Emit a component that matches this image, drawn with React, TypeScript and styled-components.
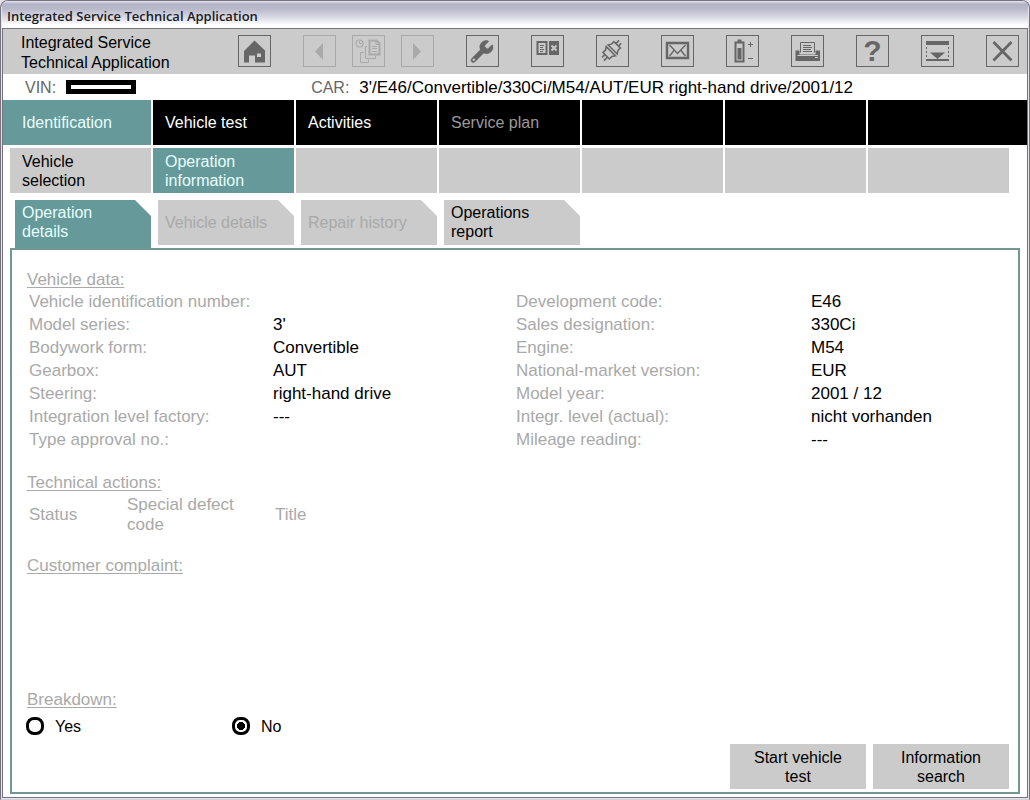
import React, { useState } from "react";
import styled, { createGlobalStyle, css } from "styled-components";

const teal = "#669999";
const grey = "#cbcbcb";
const ink = "#666666";
const faint = "#a9a9a9";

const GlobalStyle = createGlobalStyle`
  *, *::before, *::after { box-sizing: border-box; }
  body {
    margin: 0;
    background: #e4e4ea;
    color: #000;
    font-family: "Liberation Sans", Arial, sans-serif;
    font-size: 16px;
    line-height: 19px;
  }
  button { font: inherit; color: inherit; border: 0; padding: 0; cursor: pointer; }
  button:disabled { cursor: default; }
`;

const Frame = styled.div`
  display: flex;
  flex-direction: column;
  min-height: 100vh;
  padding: 0 1px 1px;
  border: 1px solid #77727f;
  border-bottom: 1px solid #d0d0d6;
  border-radius: 8px 8px 0 0;
  background: #e4e4ea;
  overflow: hidden;
`;

const TitleBar = styled.header`
  height: 27px;
  padding: 2px 5px 0;
  display: flex;
  align-items: center;
  background: linear-gradient(#e6e6ee 0, #b3b3c8 3px, #b9b9cc 8px, #dcdce6 17px, #ffffff 24px);
  color: #1a1a22;
  font-family: "Open Sans", "Noto Sans", sans-serif;
  font-size: 13px;
  font-weight: 600;
  line-height: 16px;
`;

const Client = styled.main`
  flex: 1;
  display: flex;
  flex-direction: column;
  border: 1px solid #77727f;
  background: #fff;
`;

const Toolbar = styled.div`
  display: flex;
  justify-content: space-between;
  align-items: center;
  height: 45px;
  padding: 0 8px 2px 18px;
  background: ${grey};
`;

const AppName = styled.h1`
  margin: 4px 0 0;
  font-size: 16px;
  font-weight: 400;
  line-height: 20px;
`;

const Tools = styled.div`
  display: flex;
  gap: 32px;
`;

const ToolGroup = styled.div`
  display: flex;
  gap: 16px;
`;

const ToolButton = styled.button`
  display: flex;
  align-items: center;
  justify-content: center;
  width: 33px;
  height: 32px;
  border: 1px solid ${ink};
  background: transparent;
  color: ${ink};

  &:disabled {
    border-color: ${faint};
    color: ${faint};
  }
`;

const Question = styled.span`
  font-size: 30px;
  font-weight: 700;
  line-height: 30px;
`;

const InfoBar = styled.div`
  display: flex;
  align-items: center;
  height: 26px;
  padding-left: 22px;
`;

const InfoLabel = styled.span`
  color: ${ink};
`;

const HiddenNumber = styled.span`
  width: 70px;
  height: 14px;
  margin: 0 175px 0 10px;
  border: 5px solid #000;
`;

const CarName = styled.span`
  margin-left: 10px;
  font-size: 17px;
`;

const MainNav = styled.nav`
  display: grid;
  grid-template-columns: 148fr repeat(5, 141fr) 159fr;
  gap: 2px;
  height: 45px;
`;

const SubNav = styled.nav`
  display: grid;
  grid-template-columns: repeat(7, 1fr);
  gap: 2px;
  height: 45px;
  margin: 3px 18px 0 7px;
`;

const cell = css`
  min-width: 0;
  text-align: left;
`;

const MainItem = styled.button<{ $active?: boolean; $first?: boolean }>`
  ${cell}
  padding-left: ${(p) => (p.$first ? 19 : 12)}px;
  background: ${(p) => (p.$active ? teal : "#000")};
  color: ${(p) => (p.$active ? "#e6ffff" : "#fff")};
  &:disabled { color: #999; }
`;

const SubItem = styled.button<{ $active?: boolean }>`
  ${cell}
  padding: 0 40px 0 12px;
  background: ${(p) => (p.$active ? teal : grey)};
  color: ${(p) => (p.$active ? "#e6ffff" : "#000")};
`;

const Tabs = styled.div`
  display: flex;
  gap: 7px;
  height: 48px;
  margin-top: 7px;
  padding-left: 12px;
`;

const Tab = styled.button<{ $active?: boolean }>`
  width: 136px;
  height: ${(p) => (p.$active ? 48 : 45)}px;
  padding: 0 20px ${(p) => (p.$active ? 5 : 2)}px 7px;
  text-align: left;
  background: ${(p) => (p.$active ? teal : grey)};
  color: ${(p) => (p.$active ? "#e6ffff" : "#000")};
  clip-path: polygon(0 0, calc(100% - 16px) 0, 100% 16px, 100% 100%, 0 100%);
  &:disabled {
    padding: 0 0 0 7px;
    color: ${faint};
  }
`;

const Panel = styled.section`
  flex: 1;
  display: flex;
  flex-direction: column;
  margin: 0 7px 3px;
  padding: 20px 9px 3px 15px;
  border: 2px solid #739793;
`;

const Heading = styled.h2`
  margin: 0;
  color: ${faint};
  font-size: 17px;
  font-weight: 400;
  line-height: 20px;
  text-decoration: underline 1px;
  text-underline-offset: 2px;
`;

const DataColumns = styled.div`
  display: grid;
  grid-template-columns: 487fr 493fr;
  padding-left: 2px;
  margin-bottom: 22px;
`;

const DataList = styled.dl<{ $split: string }>`
  display: grid;
  grid-template-columns: ${(p) => p.$split};
  margin: 0;
  font-size: 17px;
  line-height: 23px;
`;

const Term = styled.dt`
  color: ${faint};
`;

const Value = styled.dd`
  margin: 0;
`;

const ActionTable = styled.table`
  margin: 2px 0 21px 2px;
  border-collapse: collapse;
  table-layout: fixed;
  width: 400px;
  color: ${faint};
  font-size: 17px;
  line-height: 20px;

  th {
    padding: 0;
    font-weight: 400;
    text-align: left;
    vertical-align: middle;
  }
`;

const HeadCell = styled.th<{ $width?: number }>`
  width: ${(p) => (p.$width ? `${p.$width}px` : "auto")};
`;

const Breakdown = styled.fieldset`
  margin: auto 0 0;
  padding: 0;
  border: 0;
`;

const Legend = styled.legend`
  padding: 0;
`;

const Choices = styled.div`
  display: flex;
  margin-top: 6px;
`;

const Choice = styled.label`
  display: flex;
  align-items: center;
  gap: 11px;
  width: 206px;
  height: 20px;
`;

const Radio = styled.input`
  appearance: none;
  width: 18px;
  height: 18px;
  margin: 0 0 0 -1px;
  border: 3px solid #000;
  border-radius: 8px;
  background: #fff;
  &:checked {
    background: radial-gradient(circle, #000 4px, #fff 4px);
  }
`;

const Actions = styled.div`
  display: flex;
  justify-content: flex-end;
  gap: 7px;
  margin-top: 8px;
`;

const ActionButton = styled.button`
  width: 136px;
  height: 45px;
  padding: 0 20px;
  background: ${grey};
`;

const Icon = ({ children }: { children: React.ReactNode }) => (
  <svg width="31" height="30" viewBox="1 1 31 30" fill="currentColor" aria-hidden="true">
    {children}
  </svg>
);

const HomeIcon = () => (
  <Icon>
    <path fillRule="evenodd" d="M6 16 16.500 5.500 27 15.500V27.500H17V20.500H11V27.500H6ZM19 18.500V22H23V18.500Z" />
  </Icon>
);

const BackIcon = () => (
  <Icon><path d="M20 8V25L12 16.500Z" /></Icon>
);

const ForwardIcon = () => (
  <Icon><path d="M12 8V25L20 16.500Z" /></Icon>
);

const HistoryIcon = () => (
  <Icon>
    <g fill="none" stroke="currentColor">
      <circle cx="7.500" cy="8.500" r="3.500" strokeWidth="1.200" />
      <path d="M7.500 6V8.500H10" />
      <path d="M15 11.500H13.500V23.500H23.500V20.500M12 17.500H8.500V27.500H16.500V24.500" />
      <path d="M17.500 5.500H24.500L27.500 8.500V19.500H17.500Z" strokeWidth="2" />
      <path d="M24 6V9.500H27M20 11.500H25M20 13.500H25M20 16.500H25" />
    </g>
  </Icon>
);

const WrenchIcon = () => (
  <Icon>
    <path
      transform="translate(2.800 3.300) scale(1.100)"
      stroke="currentColor"
      strokeWidth="0.500"
      d="M14.7 6.3a1 1 0 0 0 0 1.4l1.6 1.6a1 1 0 0 0 1.4 0l3.106-3.105c.32-.322.863-.22.983.218a6 6 0 0 1-8.259 7.057l-7.91 7.91a1 1 0 0 1-2.999-3l7.91-7.91a6 6 0 0 1 7.057-8.259c.438.12.54.662.219.984z"
    />
    <circle cx="7.800" cy="24.700" r="1.200" fill={grey} />
  </Icon>
);

const BookIcon = () => (
  <Icon>
    <path d="M6.500 7H15.500V19H6.500Z" fill="none" stroke="currentColor" strokeWidth="2" />
    <path d="M9 10.500H13M9 12.500H12M9 14.500H13M9 16.500H12" stroke="currentColor" />
    <path d="M18 6H28V20H18Z" />
    <path d="M20.500 10.500 25.500 15.500M25.500 10.500 20.500 15.500" stroke={grey} strokeWidth="1.800" />
  </Icon>
);

const PlugIcon = () => (
  <Icon>
    <g transform="translate(15.500 15.500) rotate(-45)" fill="none" stroke="currentColor">
      <path d="M-1 -6.500V6.500L-4 4.500H-7.500V-4.500H-4Z" strokeWidth="1.500" />
      <path d="M1.500 -6.500V6.500L4.500 4.500H8V-4.500H4.500Z" strokeWidth="1.500" />
      <path d="M-7.500 -1.800H-11.500M-7.500 1.800H-12.500M8 -1.800H12.500M8 1.800H12" strokeWidth="1.600" />
    </g>
  </Icon>
);

const MailIcon = () => (
  <Icon>
    <g fill="none" stroke="currentColor">
      <path d="M6 8H27V23H6Z" strokeWidth="2.400" />
      <path d="M8.500 10 16.500 18.500 24.500 10M8.500 21 13 15.500M24.500 21 20 15.500" strokeWidth="1.400" />
    </g>
  </Icon>
);

const BatteryIcon = () => (
  <Icon>
    <path d="M11.500 4.500H15.500V7H11.500Z" />
    <path d="M9.500 7.500H17.500V26.500H9.500Z" fill="none" stroke="currentColor" strokeWidth="2" />
    <path d="M11.500 13H15.500V24.500H11.500Z" />
    <path d="M22 9.500H27M24.500 7V12M22 23.500H27" stroke="currentColor" />
  </Icon>
);

const PrinterIcon = () => (
  <Icon>
    <path d="M4.500 15.500H8.500V19.500H24.500V15.500H29V26H4.500Z" />
    <path d="M9.500 17.500V7.500H23.500V17.500" fill="none" stroke="currentColor" />
    <path d="M12 10.500H20M12 12.500H21M12 14.500H20M12 16.500H21" stroke="currentColor" />
    <path d="M6.500 20.500H27" stroke={grey} />
    <path d="M24 22.500H27" stroke={grey} />
  </Icon>
);

const PullDownIcon = () => (
  <Icon>
    <path d="M5 6H28V10H5ZM9 17.500H24L16.500 24Z" />
    <path d="M5 25H28" stroke="currentColor" strokeWidth="2" />
    <path d="M5.500 12V24M27.500 12V24" stroke="currentColor" strokeDasharray="2 2" />
  </Icon>
);

const CloseIcon = () => (
  <Icon><path d="M7.500 7 25.500 25.500M25.500 7 7.500 25.500" stroke="currentColor" strokeWidth="2.800" /></Icon>
);

const vehicleLeft = [
  ["Vehicle identification number:", ""],
  ["Model series:", "3'"],
  ["Bodywork form:", "Convertible"],
  ["Gearbox:", "AUT"],
  ["Steering:", "right-hand drive"],
  ["Integration level factory:", "---"],
  ["Type approval no.:", ""],
];

const vehicleRight = [
  ["Development code:", "E46"],
  ["Sales designation:", "330Ci"],
  ["Engine:", "M54"],
  ["National-market version:", "EUR"],
  ["Model year:", "2001 / 12"],
  ["Integr. level (actual):", "nicht vorhanden"],
  ["Mileage reading:", "---"],
];

const Data = ({ rows, split }: { rows: string[][]; split: string }) => (
  <DataList $split={split}>
    {rows.map(([term, value]) => (
      <React.Fragment key={term}>
        <Term>{term}</Term>
        <Value>{value}</Value>
      </React.Fragment>
    ))}
  </DataList>
);

export default function App() {
  const [breakdown, setBreakdown] = useState("No");

  return (
    <>
      <GlobalStyle />
      <Frame>
        <TitleBar>Integrated Service Technical Application</TitleBar>
        <Client>
          <Toolbar>
            <AppName>Integrated Service<br />Technical Application</AppName>
            <Tools>
              <ToolButton aria-label="Home"><HomeIcon /></ToolButton>
              <ToolGroup>
                <ToolButton aria-label="Back" disabled><BackIcon /></ToolButton>
                <ToolButton aria-label="History" disabled><HistoryIcon /></ToolButton>
                <ToolButton aria-label="Forward" disabled><ForwardIcon /></ToolButton>
              </ToolGroup>
              <ToolButton aria-label="Settings"><WrenchIcon /></ToolButton>
              <ToolButton aria-label="Documents"><BookIcon /></ToolButton>
              <ToolButton aria-label="Connection"><PlugIcon /></ToolButton>
              <ToolButton aria-label="Messages"><MailIcon /></ToolButton>
              <ToolButton aria-label="Battery"><BatteryIcon /></ToolButton>
              <ToolButton aria-label="Print"><PrinterIcon /></ToolButton>
              <ToolButton aria-label="Help"><Question>?</Question></ToolButton>
              <ToolButton aria-label="Pull down"><PullDownIcon /></ToolButton>
              <ToolButton aria-label="Close"><CloseIcon /></ToolButton>
            </Tools>
          </Toolbar>

          <InfoBar>
            <InfoLabel>VIN:</InfoLabel>
            <HiddenNumber />
            <InfoLabel>CAR:</InfoLabel>
            <CarName>3'/E46/Convertible/330Ci/M54/AUT/EUR right-hand drive/2001/12</CarName>
          </InfoBar>

          <MainNav>
            <MainItem $active $first>Identification</MainItem>
            <MainItem>Vehicle test</MainItem>
            <MainItem>Activities</MainItem>
            <MainItem disabled>Service plan</MainItem>
            <MainItem as="span" />
            <MainItem as="span" />
            <MainItem as="span" />
          </MainNav>

          <SubNav>
            <SubItem>Vehicle selection</SubItem>
            <SubItem $active>Operation information</SubItem>
            <SubItem as="span" />
            <SubItem as="span" />
            <SubItem as="span" />
            <SubItem as="span" />
            <SubItem as="span" />
          </SubNav>

          <Tabs role="tablist">
            <Tab role="tab" aria-selected $active>Operation details</Tab>
            <Tab role="tab" disabled>Vehicle details</Tab>
            <Tab role="tab" disabled>Repair history</Tab>
            <Tab role="tab">Operations report</Tab>
          </Tabs>

          <Panel>
            <Heading>Vehicle data:</Heading>
            <DataColumns>
              <Data rows={vehicleLeft} split="244fr 243fr" />
              <Data rows={vehicleRight} split="295fr 198fr" />
            </DataColumns>

            <Heading>Technical actions:</Heading>
            <ActionTable>
              <thead>
                <tr>
                  <HeadCell $width={98}>Status</HeadCell>
                  <HeadCell $width={148}>Special defect<br />code</HeadCell>
                  <HeadCell>Title</HeadCell>
                </tr>
              </thead>
            </ActionTable>

            <Heading>Customer complaint:</Heading>

            <Breakdown>
              <Legend><Heading as="span">Breakdown:</Heading></Legend>
              <Choices>
                {["Yes", "No"].map((option) => (
                  <Choice key={option}>
                    <Radio
                      type="radio"
                      name="breakdown"
                      value={option}
                      checked={breakdown === option}
                      onChange={() => setBreakdown(option)}
                    />
                    {option}
                  </Choice>
                ))}
              </Choices>
            </Breakdown>

            <Actions>
              <ActionButton>Start vehicle test</ActionButton>
              <ActionButton>Information search</ActionButton>
            </Actions>
          </Panel>
        </Client>
      </Frame>
    </>
  );
}
